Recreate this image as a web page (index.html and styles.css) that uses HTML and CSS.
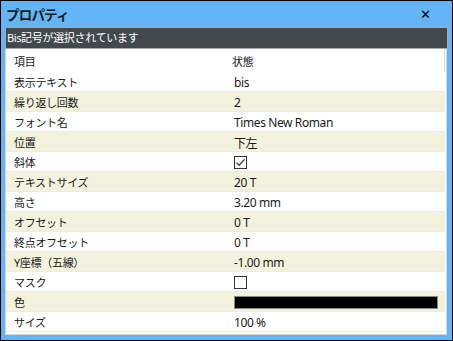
FILE: index.html
```html
<!DOCTYPE html>
<html lang="ja">
<head>
  <meta charset="UTF-8">
  <title>プロパティ</title>
  <link rel="stylesheet" href="styles.css">
</head>
<body>
  <div class="window">
    <div class="title-bar">
      <span class="title">プロパティ</span>
      <span class="close">&#x2715;</span>
    </div>
    <div class="status"><span class="latin">Bis</span>記号が選択されています</div>
    <div class="panel">
      <div class="row head">
        <div class="name">項目</div>
        <div class="value">状態</div>
      </div>
      <div class="row">
        <div class="name">表示テキスト</div>
        <div class="value">bis</div>
      </div>
      <div class="row alt">
        <div class="name">繰り返し回数</div>
        <div class="value">2</div>
      </div>
      <div class="row">
        <div class="name">フォント名</div>
        <div class="value">Times New Roman</div>
      </div>
      <div class="row alt">
        <div class="name">位置</div>
        <div class="value jp">下左</div>
      </div>
      <div class="row">
        <div class="name">斜体</div>
        <div class="value">
          <span class="check">
            <svg width="11" height="11" viewBox="0 0 11 11"><path d="M1.5 5.5 L4.2 8.2 L9.5 2.2" fill="none" stroke="#444" stroke-width="1.3"/></svg>
          </span>
        </div>
      </div>
      <div class="row alt">
        <div class="name">テキストサイズ</div>
        <div class="value">20 T</div>
      </div>
      <div class="row">
        <div class="name">高さ</div>
        <div class="value">3.20 mm</div>
      </div>
      <div class="row alt">
        <div class="name">オフセット</div>
        <div class="value">0 T</div>
      </div>
      <div class="row">
        <div class="name">終点オフセット</div>
        <div class="value">0 T</div>
      </div>
      <div class="row alt">
        <div class="name"><span class="latin">Y</span>座標（五線）</div>
        <div class="value">-1.00 mm</div>
      </div>
      <div class="row">
        <div class="name">マスク</div>
        <div class="value"><span class="check"></span></div>
      </div>
      <div class="row alt">
        <div class="name">色</div>
        <div class="value"><span class="swatch"></span></div>
      </div>
      <div class="row">
        <div class="name">サイズ</div>
        <div class="value">100 %</div>
      </div>
    </div>
  </div>
</body>
</html>
```

FILE: styles.css
```css
body {
  margin: 0;
  font-family: "Noto Sans CJK JP", sans-serif;
  background: #000;
}

.window {
  width: 453px;
  height: 341px;
  box-sizing: border-box;
  border: 1px solid #000;
  background: #64b5f6;
  padding: 0 4px 5px 4px;
  display: flex;
  flex-direction: column;
}

.title-bar {
  height: 26px;
  display: flex;
  align-items: center;
  justify-content: space-between;
  padding: 0 17px 0 1px;
}

.title {
  font-size: 13.5px;
  font-weight: bold;
  color: #1a1a1a;
  letter-spacing: -0.8px;
}

.close {
  font-family: "DejaVu Sans", sans-serif;
  font-size: 13px;
  font-weight: bold;
  color: #000;
}

.status {
  height: 22px;
  box-sizing: border-box;
  border: 1px solid #a8a8a8;
  background: #43484c;
  color: #fff;
  font-size: 11px;
  line-height: 19px;
  padding-left: 1px;
  letter-spacing: -0.3px;
}

.latin {
  font-family: "Noto Sans", sans-serif;
  letter-spacing: -0.4px;
}

.panel {
  flex: 1;
  background: #fff;
  border: 1px solid #d6d6d6;
  border-top: none;
  margin-right: 1px;
  padding-right: 1px;
}

.row {
  height: 20px;
  display: grid;
  grid-template-columns: 220px 1fr;
  align-items: center;
  border-bottom: 1px solid #ebebeb;
  box-sizing: border-box;
  color: #1a1a1a;
  padding-top: 1px;
}

.row.alt {
  background: #f3f3dd;
}

.row.head {
  height: 23px;
  border-bottom: none;
  background: #fff;
  border-right: 1px solid #d8d8d8;
}

.name {
  font-size: 11px;
  padding-left: 8px;
  letter-spacing: -0.3px;
}

.value {
  font-family: "Noto Sans", "Noto Sans CJK JP", sans-serif;
  font-size: 12px;
  letter-spacing: -0.4px;
  padding-left: 8px;
  display: flex;
  align-items: center;
}

.head .value {
  font-family: "Noto Sans CJK JP", sans-serif;
  font-size: 11px;
  letter-spacing: -0.3px;
  padding-left: 6px;
}

.value.jp {
  font-family: "Noto Sans CJK JP", sans-serif;
}

.check {
  width: 11px;
  height: 11px;
  border: 1px solid #333;
  background: #fff;
  display: flex;
  align-items: center;
  justify-content: center;
}

.swatch {
  width: 202px;
  height: 11px;
  background: #000;
  border: 1px solid #8a8a8a;
}
```
